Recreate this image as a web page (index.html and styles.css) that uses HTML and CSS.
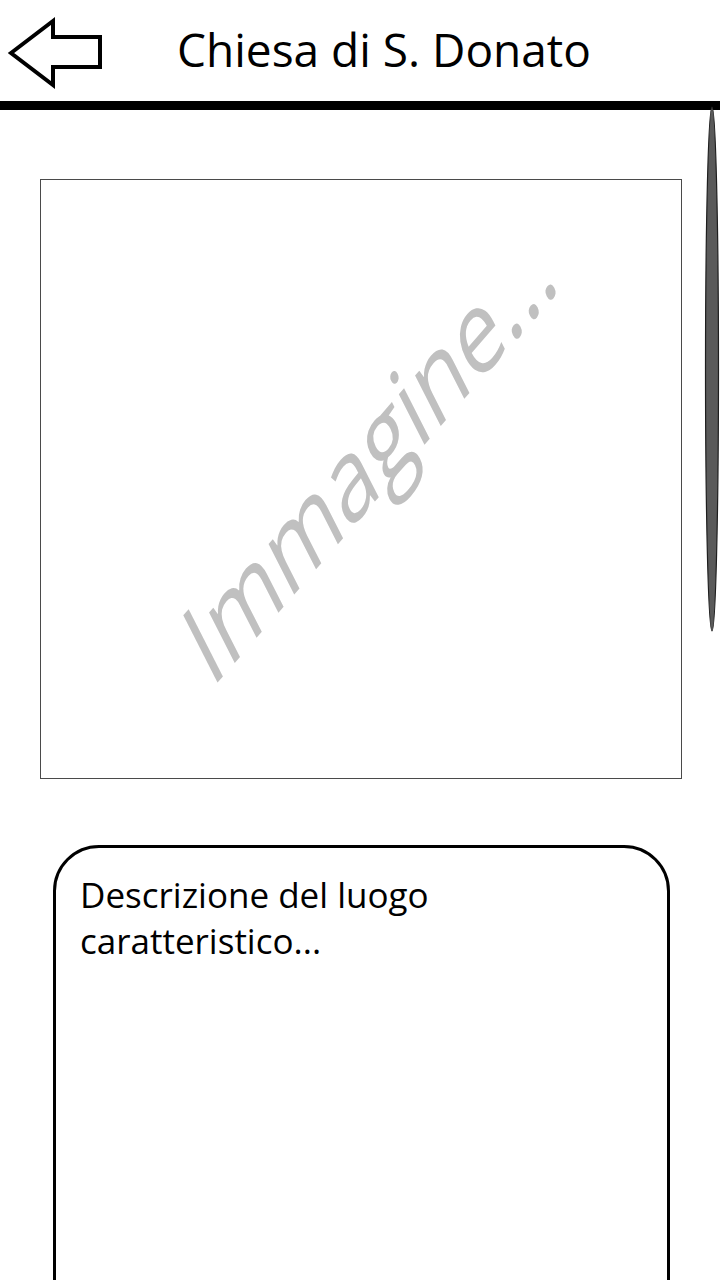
FILE: index.html
```html
<!DOCTYPE html>
<html lang="it">
<head>
<meta charset="utf-8">
<title>Chiesa di S. Donato</title>
<link rel="stylesheet" href="styles.css">
</head>
<body>
<div class="screen">
  <header class="topbar">
    <svg class="back" width="110" height="101" viewBox="0 0 110 101" aria-label="Indietro">
      <path d="M11 53 L53 21 L53 37 L100 37 L100 67 L53 67 L53 85 Z" fill="#fff" stroke="#000" stroke-width="4" stroke-linejoin="miter"/>
    </svg>
    <h1 class="title">Chiesa di S. Donato</h1>
  </header>
  <div class="rule"></div>
  <main class="content">
    <div class="image-box">
      <span class="placeholder">Immagine...</span>
    </div>
    <section class="desc">
      <p class="desc-text">Descrizione del luogo<br>caratteristico...</p>
    </section>
  </main>
  <svg class="scrollbar" width="20" height="540" viewBox="0 0 20 540">
    <ellipse cx="12" cy="265" rx="6.5" ry="262" fill="#5a5a5a" stroke="#1e1e1e" stroke-width="1.2"/>
  </svg>
</div>
</body>
</html>
```

FILE: styles.css
```css
html, body {
  margin: 0;
  padding: 0;
  background: #fff;
}
body {
  font-family: "Open Sans", "Noto Sans", sans-serif;
  color: #000;
  overflow: hidden;
}
.screen {
  position: relative;
  width: 720px;
  height: 1280px;
  overflow: hidden;
}
.topbar {
  display: flex;
  align-items: flex-start;
  height: 101px;
}
.back {
  display: block;
  flex: none;
}
.title {
  margin: 19px 0 0 67px;
  font-size: 46px;
  font-weight: 400;
  line-height: 61px;
  white-space: nowrap;
}
.rule {
  height: 9px;
  background: #000;
}
.content {
  display: flex;
  flex-direction: column;
  align-items: flex-start;
}
.image-box {
  margin: 69px 0 0 40px;
  width: 640px;
  height: 598px;
  border: 1px solid #4a4a4a;
  display: flex;
  align-items: center;
  justify-content: center;
  overflow: hidden;
}
.placeholder {
  font-size: 98px;
  line-height: 1;
  color: #c0c0c0;
  white-space: nowrap;
  transform: translate(7px, -27px) rotate(-49deg) skewX(-22deg);
}
.desc {
  margin: 66px 0 0 53px;
  width: 611px;
  height: 520px;
  border: 3px solid #000;
  border-radius: 46px 46px 0 0;
  box-sizing: content-box;
}
.desc-text {
  margin: 24px 0 0 24px;
  font-size: 35px;
  line-height: 46px;
}
.scrollbar {
  position: absolute;
  left: 700px;
  top: 104px;
}
```
